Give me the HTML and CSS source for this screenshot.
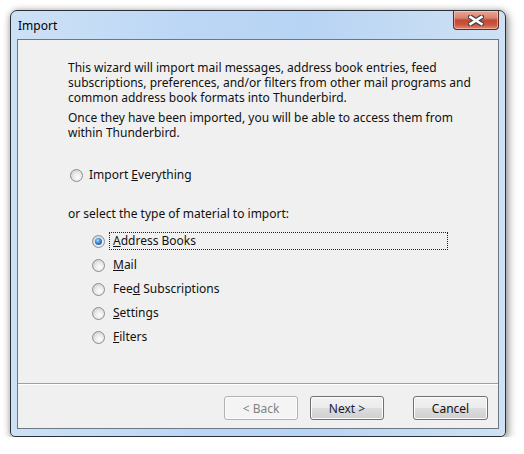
FILE: index.html
```html
<!DOCTYPE html>
<html lang="en">
  <head>
    <meta charset="UTF-8" />
    <meta name="viewport" content="width=device-width, initial-scale=1.0" />
    <title>Import</title>
    <link rel="stylesheet" href="styles.css">
  </head>
  <body>
    <div class="window">
      <div class="titlebar">
        <span class="title">Import</span>
        <button class="close" aria-label="Close">
          <svg width="16" height="11" viewBox="0 0 16 11">
            <path d="M2.5 2 L13.5 9 M13.5 2 L2.5 9" stroke="#3d4247" stroke-width="5" stroke-linecap="square" />
            <path d="M2.5 2 L13.5 9 M13.5 2 L2.5 9" stroke="#ffffff" stroke-width="2.6" stroke-linecap="square" />
          </svg>
        </button>
      </div>

      <div class="client">
        <div class="content">
          <p class="intro">
            This wizard will import mail messages, address book entries, feed
            subscriptions, preferences, and/or filters from other mail programs and
            common address book formats into Thunderbird.
          </p>
          <p class="intro second">
            Once they have been imported, you will be able to access them from
            within Thunderbird.
          </p>

          <label class="row everything">
            <input type="radio" name="what" />
            <span class="label">Import <u>E</u>verything</span>
          </label>

          <div class="hint">or select the type of material to import:</div>

          <div class="options">
            <label class="row">
              <input type="radio" name="what" checked />
              <span class="label focused"><u>A</u>ddress Books</span>
            </label>
            <label class="row">
              <input type="radio" name="what" />
              <span class="label"><u>M</u>ail</span>
            </label>
            <label class="row">
              <input type="radio" name="what" />
              <span class="label">Fee<u>d</u> Subscriptions</span>
            </label>
            <label class="row">
              <input type="radio" name="what" />
              <span class="label"><u>S</u>ettings</span>
            </label>
            <label class="row">
              <input type="radio" name="what" />
              <span class="label"><u>F</u>ilters</span>
            </label>
          </div>
        </div>

        <div class="footer">
          <button class="btn" disabled>&lt; Back</button>
          <button class="btn next">Next &gt;</button>
          <button class="btn cancel">Cancel</button>
        </div>
      </div>
    </div>
  </body>
</html>
```

FILE: styles.css
```css
* {
  margin: 0;
  padding: 0;
  box-sizing: border-box;
}

body {
  font-family: "Noto Sans", "Open Sans", sans-serif;
  font-size: 12px;
  color: #111;
  background: #fff;
  padding: 10px 0 0 10px;
}

.window {
  width: 496px;
  height: 427px;
  display: flex;
  flex-direction: column;
  padding: 0 6px 7px 6px;
  border: 1px solid #2c3036;
  border-radius: 7px 7px 5px 5px;
  background: linear-gradient(to right, #cde1f6 0%, #bcd7f5 35%, #b8d4f4 60%, #c6dcf3 85%, #cfe2f5 100%);
  box-shadow: 2px 3px 10px rgba(0, 0, 0, 0.4), 0 0 6px rgba(0, 0, 0, 0.2);
}

.titlebar {
  height: 28px;
  display: flex;
  justify-content: space-between;
  align-items: center;
}

.title {
  padding-left: 1px;
  padding-top: 1px;
  color: #000;
}

.close {
  align-self: flex-start;
  width: 46px;
  height: 19px;
  border: 1px solid #5e2a22;
  border-top: none;
  border-radius: 0 0 4px 4px;
  background: linear-gradient(#e8a898 0%, #d8806c 40%, #c24a34 50%, #c9553e 75%, #e08a6c 100%);
  box-shadow: inset 0 0 0 1px rgba(255, 220, 210, 0.5);
  display: flex;
  justify-content: center;
  align-items: center;
}

.client {
  flex: 1;
  display: flex;
  flex-direction: column;
  border: 1px solid #6b7785;
  background: #f0f0f0;
}

.content {
  flex: 1;
  padding: 20px 50px 0 50px;
}

.intro {
  line-height: 15px;
  width: 405px;
}

.intro.second {
  margin-top: 5px;
}

.row {
  display: flex;
  align-items: center;
  gap: 4px;
  height: 24px;
}

.row input {
  appearance: none;
  width: 13px;
  height: 13px;
  flex: none;
  border: 1px solid #8a8c8e;
  border-radius: 50%;
  background: radial-gradient(circle at 60% 65%, #ffffff 0%, #e8e8e8 45%, #c6c6c6 100%);
  display: flex;
  justify-content: center;
  align-items: center;
}

.row input:checked::after {
  content: "";
  width: 7px;
  height: 7px;
  border-radius: 50%;
  background: radial-gradient(circle at 40% 35%, #b4e0fa 0%, #3a8ad6 40%, #124b8c 100%);
}

.label {
  flex: 1;
  height: 18px;
  line-height: 16px;
  padding: 0 3px;
  border: 1px dotted transparent;
}

.label.focused {
  border-color: #222;
}

.everything {
  margin-top: 23px;
  padding-left: 2px;
  gap: 2px;
}

.hint {
  margin-top: 19px;
  line-height: 15px;
}

.options {
  margin-top: 8px;
  padding-left: 24px;
}

.footer {
  display: flex;
  justify-content: flex-end;
  padding: 12px 10px 8px 0;
  border-top: 1px solid #a0a0a0;
  box-shadow: inset 0 1px 0 #ffffff;
}

.btn {
  width: 74px;
  height: 24px;
  font-family: inherit;
  font-size: 12px;
  color: #111;
  border: 1px solid #707070;
  border-radius: 3px;
  background: linear-gradient(#f2f2f2 0%, #ebebeb 50%, #dddddd 51%, #cfcfcf 100%);
  box-shadow: inset 0 0 0 1px #fcfcfc;
}

.btn:disabled {
  color: #838383;
  border-color: #adb2b5;
  background: #f4f4f4;
}

.next {
  margin-left: 12px;
  color: #1a1a3a;
}

.cancel {
  width: 75px;
  margin-left: 29px;
}
```
